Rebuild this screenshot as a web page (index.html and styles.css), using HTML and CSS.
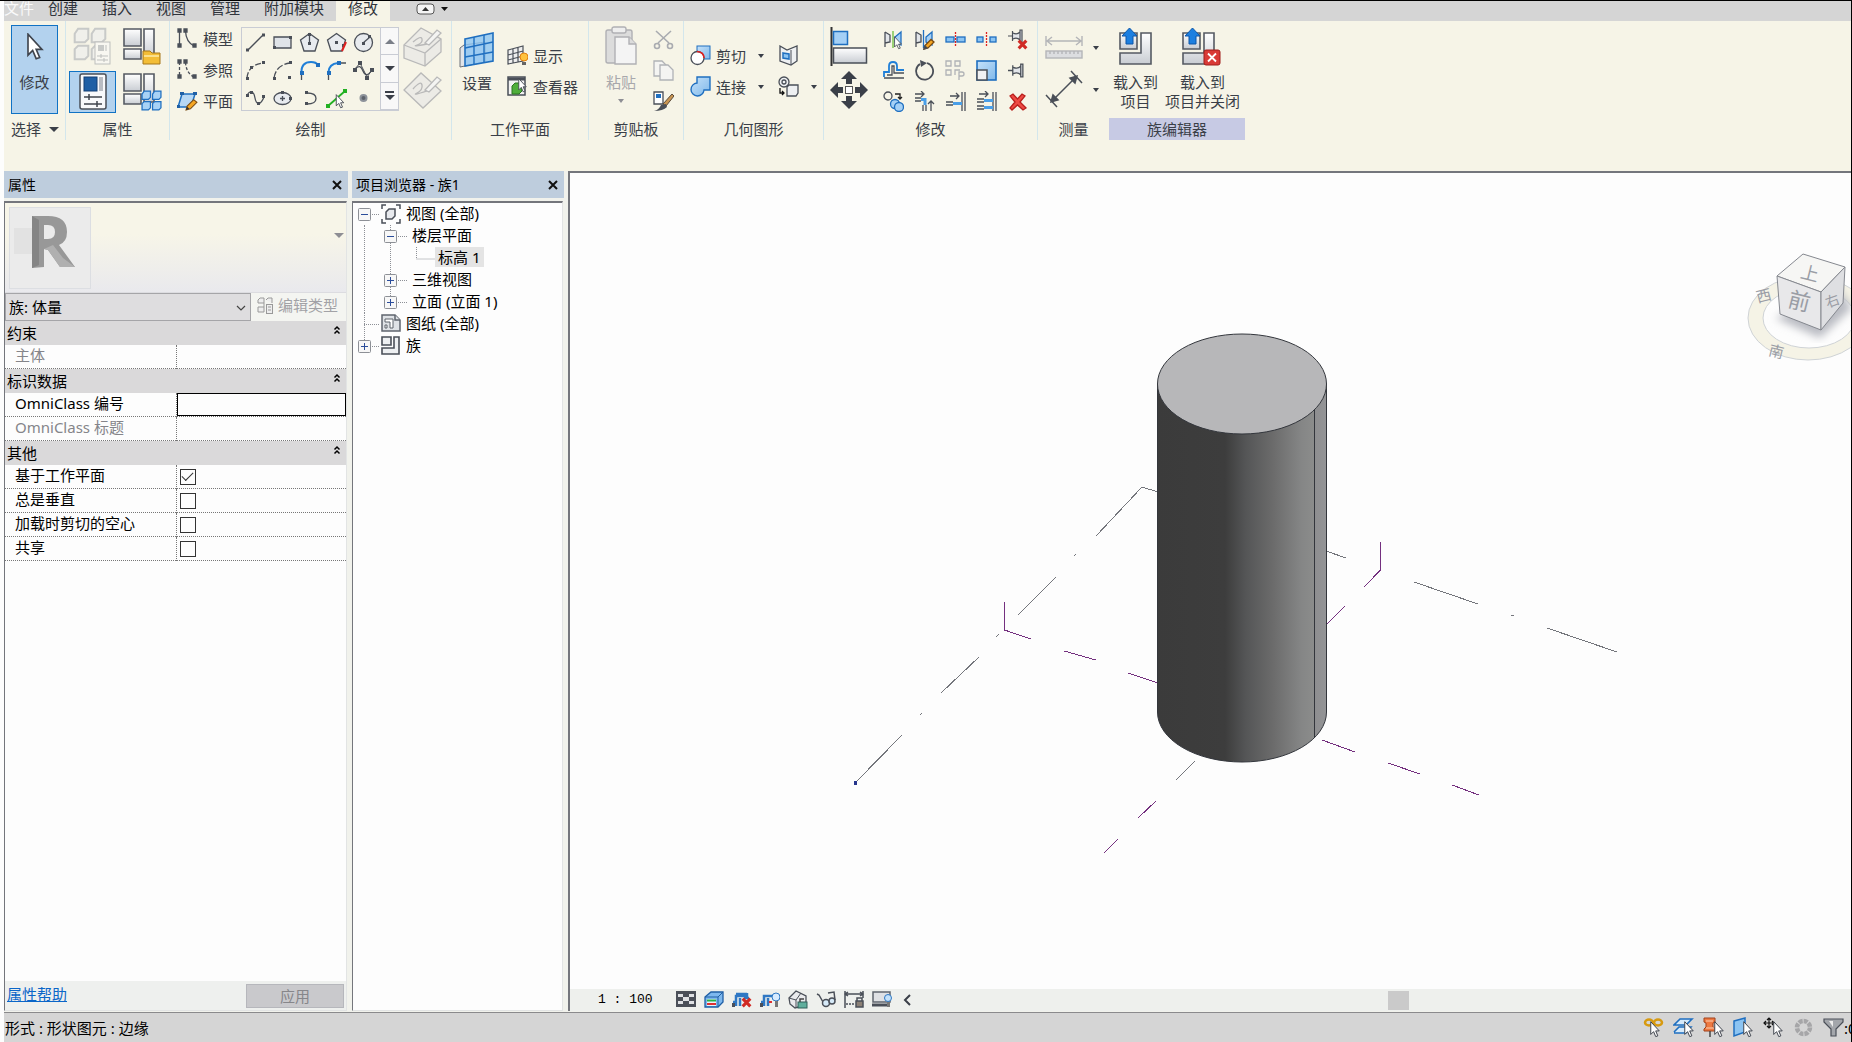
FILE: index.html
```html
<!DOCTYPE html>
<html lang="zh-CN">
<head>
<meta charset="utf-8">
<title>族1</title>
<link rel="stylesheet" href="styles.css">
</head>
<body>
<svg class="defs" aria-hidden="true">
  <defs>
    <linearGradient id="grey" x1="0" y1="0" x2="0" y2="1"><stop offset="0" stop-color="#ffffff"/><stop offset="1" stop-color="#c9cdd3"/></linearGradient>
    <linearGradient id="blue" x1="0" y1="0" x2="1" y2="1"><stop offset="0" stop-color="#c6e2fa"/><stop offset="1" stop-color="#7fb8ea"/></linearGradient>
    <symbol id="cursor" viewBox="0 0 14 24"><path d="M1 1V19L5 15L8 22L11 21L8 14H13Z" fill="#fff" stroke="#3f444d" stroke-width="1.4"/></symbol>
    <symbol id="pencil" viewBox="0 0 12 12"><path d="M1 11L2 7.500L8 1.500L11 4L5 10Z" fill="#f5a623" stroke="#7a4a10"/><path d="M1 11L2 8L4 10Z" fill="#333"/></symbol>
    <symbol id="family" viewBox="0 0 38 38"><g fill="url(#grey)" stroke="#555a63" stroke-width="1.600"><path d="M1 1H18V18H1Z"/><path d="M21 1H31V29H21Z"/><path d="M1 21H18V31H1Z"/></g></symbol>
    <symbol id="cubes" viewBox="0 0 20 20"><g stroke-width="1.200"><path d="M1 4L3 1H9V7L7 9H1Z"/><path d="M11 4L13 1H19V7L17 9H11Z"/><path d="M1 13L3 11H9V17L7 19H1Z"/><path d="M11 13L13 11H19V17L17 19H11Z"/></g></symbol>
    <symbol id="redx" viewBox="0 0 10 10"><path d="M1.500 1.500L8.500 8.500M8.500 1.500L1.500 8.500" stroke="#d02a24" stroke-width="2.800"/></symbol>
    <symbol id="pin" viewBox="0 0 16 14"><path d="M0 7H4M4.500 2V12M5 4Q9 6 12 3V11Q9 8 5 10M12 1H14V13H12Z" fill="#e3e6ea" stroke="#4a4f58" stroke-width="1.200"/></symbol>
    <symbol id="load" viewBox="0 0 40 38"><g fill="url(#grey)" stroke="#555a63" stroke-width="1.600"><path d="M1 5H18V21H1Z"/><path d="M22 5H32V36H1V25H22Z"/></g><path d="M10.500 0L18 8H14V16H7V8H3Z" fill="#1c7fe0" stroke="#0c57a8"/></symbol>
    <symbol id="collapse" viewBox="0 0 8 10"><path d="M1.500 4.500L4 2L6.500 4.500M1.500 8.500L4 6L6.500 8.500" fill="none" stroke="#000" stroke-width="1.500"/></symbol>
    <symbol id="box" viewBox="0 0 13 13"><rect x=".5" y=".5" width="12" height="12" rx="1" fill="#f7f7f7" stroke="#8d9096"/><path d="M3 6.500H10" stroke="#2b4d9b"/></symbol>
    <symbol id="close" viewBox="0 0 12 12"><path d="M2 2L10 10M10 2L2 10" stroke="#111" stroke-width="2"/></symbol>
  </defs>
</svg>

<nav class="tabs" role="tablist">
  <button class="tab tab-file" role="tab">文件</button>
  <button class="tab" role="tab">创建</button>
  <button class="tab" role="tab">插入</button>
  <button class="tab" role="tab">视图</button>
  <button class="tab" role="tab">管理</button>
  <button class="tab" role="tab">附加模块</button>
  <button class="tab tab-active" role="tab" aria-selected="true">修改</button>
  <button class="ribbon-toggle" aria-label="最小化功能区">
    <svg width="32" height="12" viewBox="0 0 32 12"><rect x="1" y="1" width="17" height="10" rx="3" fill="#f4f4f4" stroke="#555"/><path d="M6 8L9.500 4L13 8Z" fill="#333"/><path d="M25 4H32L28.500 8Z" fill="#111"/></svg>
  </button>
</nav>

<header class="ribbon">
  <section class="group g-select">
    <div class="tools">
      <button class="modify"><svg width="18" height="28"><use href="#cursor"/></svg><span>修改</span></button>
    </div>
    <h2 class="label">选择<i class="arrow arrow-big"></i></h2>
  </section>

  <section class="group g-props">
    <div class="tools prop-grid">
      <button aria-label="族类型属性"><svg width="40" height="40" viewBox="0 0 40 40"><g opacity=".55"><svg width="34" height="34" fill="#eceef0" stroke="#a4a8b0"><use href="#cubes"/></svg><rect x="22" y="15" width="15" height="22" fill="#fafafa" stroke="#8f949c"/><rect x="25" y="18" width="6" height="6" fill="#a4a8b0"/><path d="M33 18V24M24 29H35M28 27V31M24 33H35M31 31V35" stroke="#8f949c"/></g></svg></button>
      <button aria-label="族类别"><svg width="40" height="40" viewBox="0 0 40 40"><use href="#family" width="38" height="38" x="1" y="1"/><path d="M21 24H28L30 26H38V37H21Z" fill="#f3bd36" stroke="#a5761a"/><path d="M22 29H37" stroke="#fbe08c" stroke-width="2"/></svg></button>
      <button class="pressed" aria-label="属性"><svg width="40" height="38" viewBox="0 0 40 38"><rect x="7" y="1" width="26" height="35" rx="2" fill="#f8f9fb" stroke="#4a4f58" stroke-width="1.500"/><rect x="11" y="4" width="13" height="14" fill="#1f5fa5" stroke="#123f75"/><rect x="26" y="4" width="4" height="14" fill="#b8bcc3"/><path d="M11 24H29M16 21V27M11 31H29M24 28V34" stroke="#3f444d" stroke-width="1.500"/></svg></button>
      <button aria-label="族类型"><svg width="40" height="40" viewBox="0 0 40 40"><use href="#family" width="38" height="38" x="1" y="1"/><svg x="19" y="18" width="21" height="21" viewBox="0 0 20 20" fill="#a8d2f6" stroke="#1f6fc0"><use href="#cubes" width="20" height="20"/></svg></svg></button>
    </div>
    <h2 class="label">属性</h2>
  </section>

  <section class="group g-draw">
    <div class="tools">
      <div class="stack">
        <button class="row"><svg width="21" height="21" viewBox="0 0 21 21" fill="none" stroke="#4a4f58" stroke-width="1.300"><path d="M2.500 3V17M8.500 3Q9 14 17 18"/><path fill="#4a4f58" d="M1 1h3v3H1zM1 16h3v3H1zM7 1h3v3H7zM16 16h3v3h-3z"/></svg>模型</button>
        <button class="row"><svg width="21" height="21" viewBox="0 0 21 21" fill="none" stroke="#4a4f58" stroke-width="1.300"><path stroke-dasharray="3 2" d="M2.500 3V17M8.500 3Q9 14 17 18"/><path fill="#4a4f58" d="M1 1h3v3H1zM1 16h3v3H1zM7 1h3v3H7zM16 16h3v3h-3z"/></svg>参照</button>
        <button class="row"><svg width="21" height="21" viewBox="0 0 21 21"><path d="M5 4H18L14 17H1Z" fill="#b8d8f4" stroke="#1f6fc0" stroke-width="1.500"/><path fill="#1f5fa5" d="M3 2h4v3H3zM16 2h4v3h-4zM0 15h3v3H0z"/><use href="#pencil" x="8" y="8" width="13" height="13"/></svg>平面</button>
      </div>
      <div class="gallery">
        <div class="shapes">
          <button aria-label="直线"><svg viewBox="0 0 21 21" class="ink"><path d="M3 18L18 3"/><path class="dot" d="M1 16.500h3v3H1zM17 1.500h3v3h-3z"/></svg></button>
          <button aria-label="矩形"><svg viewBox="0 0 21 21" class="ink"><path d="M2 5H19V16H2Z" fill="#dfe3e8"/><path class="dot" d="M17 4h3v3h-3zM1 14h3v3H1z"/></svg></button>
          <button aria-label="内接多边形"><svg viewBox="0 0 21 21" class="ink"><path d="M10.500 1.500L19.500 8L16 19H5L1.500 8Z" fill="#e8ebef"/><path d="M10.500 2V11"/><path class="dot" d="M9 10h3v3H9zM9 1h3v3H9z"/></svg></button>
          <button aria-label="外接多边形"><svg viewBox="0 0 21 21" class="ink"><path d="M10.500 1.500L19.500 8L16 19H5L1.500 8Z" fill="#e8ebef"/><path class="dot" d="M9 9h3v3H9zM16 12h3v3h-3z"/><path d="M20 10L16 19" stroke="#e02020" stroke-width="2"/></svg></button>
          <button aria-label="圆形"><svg viewBox="0 0 21 21" class="ink"><circle cx="10.500" cy="10.500" r="9" fill="#e8ebef"/><path d="M10 11L17 5"/><path class="dot" d="M9 10h3v3H9zM15 3h3v3h-3z"/></svg></button>
          <button aria-label="起点终点半径弧"><svg viewBox="0 0 21 21" class="ink"><path d="M2 18Q3 5 18 3" stroke-dasharray="6 2"/><path class="dot" d="M1 17h3v3H1zM17 1h3v3h-3zM5 6h3v3H5z"/></svg></button>
          <button aria-label="圆心端点弧"><svg viewBox="0 0 21 21" class="ink"><path d="M2 18Q4 5 18 3" stroke-dasharray="7 2"/><path class="dot" d="M1 17h3v3H1zM17 1h3v3h-3zM16 16h3v3h-3z"/></svg></button>
          <button aria-label="相切弧"><svg viewBox="0 0 21 21" class="ink"><path d="M2.500 13Q2 2 12 2Q17 2 19 5" stroke="#1f7fd8" stroke-width="2"/><path d="M2.500 14V20"/><path fill="#1f6fc0" stroke="none" d="M1 11h4v4H1zM17 3h4v4h-4z"/></svg></button>
          <button aria-label="圆角弧"><svg viewBox="0 0 21 21" class="ink"><path d="M2.500 12Q3 4 12 3" stroke="#1f7fd8" stroke-width="2"/><path d="M2.500 14V20M14 3H20"/><path fill="#1f6fc0" stroke="none" d="M1 11h4v4H1zM11 1h4v4h-4z"/></svg></button>
          <button aria-label="样条曲线"><svg viewBox="0 0 21 21" class="ink"><path d="M2 9C6 5 8 6 10 11S15 16 19 10"/><path d="M2 9L7 3L14 17L19 10" stroke-width="1"/><path class="dot" d="M0 8h4v4H0zM5 1h4v4H5zM12 16h4v4h-4zM17 8h4v4h-4z"/></svg></button>
          <button aria-label="通过点的样条曲线"><svg viewBox="0 0 21 21" class="ink"><path d="M2 7C6 1 9 4 10 10S15 19 19 9"/><path class="dot" d="M1 6h3v3H1zM5 3h3v3H5zM12 14h3v3h-3zM17 7h3v3h-3z"/></svg></button>
          <button aria-label="椭圆"><svg viewBox="0 0 21 21" class="ink"><ellipse cx="10.500" cy="10.500" rx="8.500" ry="6" fill="#e8ebef"/><path d="M10.500 8V13M8 10.500H13"/><path class="dot" d="M9 3h3v3H9zM17 9h3v3h-3z"/></svg></button>
          <button aria-label="半椭圆"><svg viewBox="0 0 21 21" class="ink"><path d="M8 5Q17 5 17 10.500T8 16"/><path class="dot" d="M6 3h3v3H6zM6 14h3v3H6z"/></svg></button>
          <button aria-label="拾取线"><svg viewBox="0 0 21 21" class="ink"><path d="M2 18L19 3" stroke="#22b022" stroke-width="1.800"/><path fill="#22b022" stroke="none" d="M0 16h4v4H0zM17 1h4v4h-4z"/><use href="#cursor" x="9" y="6" width="10" height="15"/></svg></button>
          <button aria-label="点图元"><svg viewBox="0 0 21 21"><circle cx="10.500" cy="10" r="4" fill="#8d929a"/><circle cx="10.500" cy="10" r="2" fill="#5d626b"/></svg></button>
        </div>
        <div class="scroller">
          <button aria-label="上一行"><i class="arrow arrow-up"></i></button>
          <button aria-label="下一行"><i class="arrow arrow-big"></i></button>
          <button aria-label="更多"><i class="bar"></i><i class="arrow arrow-big"></i></button>
        </div>
      </div>
      <div class="surface">
        <svg width="40" height="40" viewBox="0 0 40 40" fill="#ecebe6" stroke="#b9b9b9" stroke-width="1.300"><path d="M1 18L18 1L38 12V25L22 39L1 31Z"/><path d="M1 18L22 26L38 12M22 26V39"/><path d="M10 15Q18 8 19 12T14 18T24 17" fill="none"/><path d="M22 16L34 3L38 6L26 18Z" fill="#f4f4f2"/></svg>
        <svg width="40" height="40" viewBox="0 0 40 40" fill="#ecebe6" stroke="#b9b9b9" stroke-width="1.300"><path d="M1 19L18 2L38 20L20 37Z"/><path d="M10 18Q18 9 19 14T14 22T24 20" fill="none"/><path d="M22 19L34 6L38 9L26 21Z" fill="#f4f4f2"/></svg>
      </div>
    </div>
    <h2 class="label">绘制</h2>
  </section>

  <section class="group g-plane">
    <div class="tools">
      <button class="big"><svg width="36" height="36" viewBox="0 0 36 36"><path d="M1 16L5 13L26 10V30L1 35Z" fill="#e1e4e8" stroke="#6b7078"/><path d="M6 7L34 1V29L6 34Z" fill="#8cc4f2" fill-opacity=".8" stroke="#1f6fc0" stroke-width="1.600"/><path d="M15 5V32M25 3V31M6 16L34 10M6 25L34 20" stroke="#1f6fc0" stroke-width="1.400"/></svg><span>设置</span></button>
      <div class="stack two">
        <button class="row"><svg width="21" height="21" viewBox="0 0 21 21"><path d="M1 5L16 1V16L1 19ZM6 4V18M11 2V17M1 10L16 6M1 15L16 11" fill="#eee" stroke="#4a4f58" stroke-width="1.200"/><circle cx="17" cy="12" r="4" fill="#ffc23d" stroke="#e08010"/><path d="M15 17H19V20H15Z" fill="#666"/></svg>显示</button>
        <button class="row"><svg width="21" height="21" viewBox="0 0 21 21"><rect x="1" y="1" width="17" height="18" fill="#f2f2f2" stroke="#4a4f58" stroke-width="1.500"/><path d="M1 3H18" stroke="#4a4f58" stroke-width="3"/><path d="M5 10L8 7H15V15L12 18H5Z" fill="#4fae3a" stroke="#2b7420"/><use href="#cursor" x="11" y="2" width="9" height="15"/></svg>查看器</button>
      </div>
    </div>
    <h2 class="label">工作平面</h2>
  </section>

  <section class="group g-clip">
    <div class="tools">
      <button class="big" disabled><svg width="34" height="40" viewBox="0 0 34 40" fill="#dcdcdc" stroke="#b0b0b4" stroke-width="1.400"><rect x="2" y="4" width="26" height="33" rx="2"/><rect x="8" y="1" width="14" height="6" rx="2" fill="#eee"/><path d="M11 11H25L32 18V38H11Z" fill="#f4f4f4"/><path d="M25 11V18H32"/></svg><span>粘贴</span><i class="arrow dim"></i></button>
      <div class="stack">
        <svg width="21" height="21" viewBox="0 0 21 21" fill="none" stroke="#a9abb0" stroke-width="1.600"><path d="M3 2L16 14M18 2L5 14"/><circle cx="4" cy="17" r="2.500"/><circle cx="17" cy="17" r="2.500"/></svg>
        <svg width="21" height="21" viewBox="0 0 21 21" fill="#f4f4f2" stroke="#b0b2b6" stroke-width="1.300"><path d="M1 1H9L13 5V16H1Z"/><path d="M7 5H15L20 10V20H7Z"/></svg>
        <svg width="21" height="21" viewBox="0 0 21 21"><path d="M1 1H10V13H1Z" fill="#fff" stroke="#4a4f58" stroke-width="1.300"/><path d="M3 3H8V7H3Z" fill="#1f6fc0"/><path d="M10 13L19 3L21 5L13 15Z" fill="#c99552" stroke="#5a4a3a"/><path d="M1 20Q6 19 8 14L13 13L14 16Q10 20 1 20Z" fill="#4a4f58"/></svg>
      </div>
    </div>
    <h2 class="label">剪贴板</h2>
  </section>

  <section class="group g-geom">
    <div class="tools">
      <div class="stack two">
        <button class="row"><svg width="21" height="21" viewBox="0 0 21 21"><rect x="7" y="1" width="13" height="13" fill="url(#blue)" stroke="#1f6fc0"/><circle cx="7.500" cy="13" r="6.500" fill="#fff" stroke="#4a4f58" stroke-width="1.300"/><path d="M7 6.500Q14 7 14 13" fill="none" stroke="#e02020" stroke-width="1.600"/></svg>剪切<i class="arrow"></i></button>
        <button class="row"><svg width="21" height="21" viewBox="0 0 21 21"><path d="M7 1H20V14H14A6.500 6.500 0 1 1 7 7Z" fill="url(#blue)" stroke="#1f6fc0" stroke-width="1.400"/></svg>连接<i class="arrow"></i></button>
      </div>
      <div class="stack two">
        <button class="row" aria-label="墙洞口"><svg width="21" height="21" viewBox="0 0 21 21"><path d="M2 1L9 5L19 1V16L13 20L2 16Z" fill="#eef0f2" stroke="#4a4f58" stroke-width="1.300"/><path d="M13 5V20" stroke="#4a4f58"/><path d="M5 8L11 9V14L5 13Z" fill="#8cc4f2" stroke="#1f6fc0" stroke-width="1.500"/></svg></button>
        <button class="row" aria-label="拆分面"><svg width="21" height="21" viewBox="0 0 21 21" fill="#eef0f2" stroke="#4a4f58" stroke-width="1.300"><circle cx="6" cy="6" r="5"/><circle cx="6" cy="6" r="2"/><path d="M9 11L11 9H20V17L18 20H9Z"/><path d="M2 12V17H6M4 15L6 17L4 19" fill="none" stroke="#111"/></svg><i class="arrow"></i></button>
      </div>
    </div>
    <h2 class="label">几何图形</h2>
  </section>

  <section class="group g-edit">
    <div class="tools">
      <div class="pair">
        <button aria-label="对齐"><svg width="38" height="40" viewBox="0 0 38 40"><path d="M1.500 0V39" stroke="#333" stroke-width="2"/><rect x="3.500" y="4.500" width="14" height="13" fill="#a4d0f6" stroke="#1f6fc0" stroke-width="1.500"/><rect x="3.500" y="21" width="33" height="15" fill="url(#grey)" stroke="#4a4f58" stroke-width="1.500"/></svg></button>
        <button aria-label="移动"><svg width="38" height="38" viewBox="0 0 38 38" fill="#3a3f48"><path d="M19 0L27 8H22V13H16V8H11ZM19 38L27 30H22V25H16V30H11ZM0 19L8 11V16H13V22H8V27ZM38 19L30 11V16H25V22H30V27Z"/><rect x="15.500" y="15.500" width="7" height="7" fill="#fff" stroke="#555"/></svg></button>
      </div>
      <div class="edit-grid">
        <button aria-label="镜像拾取轴"><svg viewBox="0 0 21 21" class="ink"><path d="M2 3V18M2 3L7 6V13L2 14" fill="#e3e6ea"/><path d="M18 3L12 8V13L18 16Z" fill="#a4d0f6" stroke="#1f6fc0"/><path d="M10 2V19" stroke="#6bbf3a"/><use href="#cursor" x="11" y="7" width="8" height="14"/></svg></button>
        <button aria-label="镜像绘制轴"><svg viewBox="0 0 21 21" class="ink"><path d="M2 3V18M2 3L7 6V13L2 14" fill="#e3e6ea"/><path d="M18 3L12 8V13L18 16Z" fill="#a4d0f6" stroke="#1f6fc0"/><path d="M9.500 1V19" stroke="#1f6fc0"/><use href="#pencil" x="9" y="9" width="12" height="12"/></svg></button>
        <button aria-label="拆分图元"><svg viewBox="0 0 21 21" class="ink"><rect x="1" y="8" width="8" height="5" fill="#8cc4f2" stroke="#1f6fc0"/><rect x="12" y="8" width="8" height="5" fill="#8cc4f2" stroke="#1f6fc0"/><path d="M10.500 3V18" stroke="#e02020" stroke-dasharray="2 1"/></svg></button>
        <button aria-label="用间隙拆分"><svg viewBox="0 0 21 21" class="ink"><rect x="1" y="8" width="6" height="5" fill="#8cc4f2" stroke="#1f6fc0"/><rect x="14" y="8" width="6" height="5" fill="#8cc4f2" stroke="#1f6fc0"/><path d="M10.500 3V18" stroke="#e02020" stroke-dasharray="2 1"/></svg></button>
        <button aria-label="解锁"><svg viewBox="0 0 21 21"><use href="#pin" x="1" y="0" width="16" height="14"/><use href="#redx" x="10" y="10" width="11" height="11"/></svg></button>
        <button aria-label="偏移"><svg viewBox="0 0 21 21" class="ink"><path d="M1 17V12H6V6Q6 2 10 2T14 6V10H21" stroke="#1f7fd8" stroke-width="1.800"/><path d="M1 18H21M4 15H9V6H11V13H21"/></svg></button>
        <button aria-label="旋转"><svg viewBox="0 0 21 21" class="ink"><path d="M6 4A8.500 8.500 0 1 0 13 3" stroke-width="1.800"/><path d="M6 0L13 3L7 7Z" class="dot"/></svg></button>
        <button aria-label="阵列" disabled><svg viewBox="0 0 21 21" fill="none" stroke="#b0b2b6" stroke-width="1.300"><path d="M1 1H6V6H1ZM10 1H15V6H10ZM1 10H6V15H1ZM15 10H10V15M14 20V12H17Q19 12 19 14T17 16H14"/></svg></button>
        <button aria-label="缩放"><svg viewBox="0 0 21 21"><rect x="1" y="1" width="19" height="19" fill="url(#blue)" stroke="#1f6fc0" stroke-width="1.600"/><rect x="1" y="10" width="10" height="10" fill="#f0f1f3" stroke="#4a4f58" stroke-width="1.500"/></svg></button>
        <button aria-label="锁定"><svg viewBox="0 0 21 21"><use href="#pin" x="1" y="3" width="17" height="15"/></svg></button>
        <button aria-label="复制"><svg viewBox="0 0 21 21" class="ink"><circle cx="5" cy="5" r="4"/><circle cx="12" cy="13" r="4.500" fill="#a4d0f6" stroke="#1f6fc0"/><circle cx="16" cy="16" r="4.500" fill="#a4d0f6" stroke="#1f6fc0"/><path d="M12 3H17V8M15 6L17 8L19 6" stroke="#222"/></svg></button>
        <button aria-label="修剪延伸为角"><svg viewBox="0 0 21 21" class="ink"><path d="M1 3H10M7 0L10 3L7 6M17 20V10M14 13L17 10L20 13"/><path d="M1 7H7M1 10H7M9 14V20M12 14V20"/><path d="M7 8.500H11V14" stroke="#4a9fe8" stroke-width="3"/></svg></button>
        <button aria-label="修剪延伸单个图元"><svg viewBox="0 0 21 21" class="ink"><path d="M5 5H14M11 2L14 5L11 8M17 1V20M20 1V20"/><path d="M1 11H8M1 14H8"/><path d="M8 12.500H17" stroke="#4a9fe8" stroke-width="3"/></svg></button>
        <button aria-label="修剪延伸多个图元"><svg viewBox="0 0 21 21" class="ink"><path d="M3 3H12M9 0L12 3L9 6M17 1V20M20 1V20"/><path d="M1 8H8M1 11H8M1 15H8M1 18H8"/><path d="M8 9.500H17M8 16.500H17" stroke="#4a9fe8" stroke-width="3"/></svg></button>
        <button aria-label="删除"><svg viewBox="0 0 21 21"><path d="M3 5L6 3L10.500 8L15 3L18 5L13 11L19 17L16 19L10.500 14L5 19L3 17L8 11Z" fill="#ee4a44" stroke="#b81f1c" stroke-width="1.300"/></svg></button>
      </div>
    </div>
    <h2 class="label">修改</h2>
  </section>

  <section class="group g-measure">
    <div class="tools">
      <div class="pair">
        <button class="row" aria-label="测量" disabled><svg width="38" height="24" viewBox="0 0 38 24" fill="none" stroke="#b4b5b8" stroke-width="1.400"><path d="M2 5H36M7 1L2 5L7 9M31 1L36 5L31 9M1 0V10M37 0V10"/><rect x="1" y="15" width="36" height="7" fill="#dcdde0"/><path d="M5 15V18M9 15V18M13 15V18M17 15V18M21 15V18M25 15V18M29 15V18M33 15V18"/></svg><i class="arrow"></i></button>
        <button class="row" aria-label="对齐尺寸标注"><svg width="38" height="40" viewBox="0 0 38 40" fill="none" stroke="#4a4f58" stroke-width="1.500"><path d="M7 31L31 7M1 25L12 37M26 1L37 13"/><path fill="#4a4f58" d="M6 32L8 25L13 30ZM32 6L30 13L25 8Z"/></svg><i class="arrow"></i></button>
      </div>
    </div>
    <h2 class="label">测量</h2>
  </section>

  <section class="group g-editor">
    <div class="tools">
      <button class="big"><svg width="34" height="38" viewBox="0 0 34 38"><use href="#load" width="40" height="38"/></svg><span>载入到<br>项目</span></button>
      <button class="big"><svg width="40" height="38" viewBox="0 0 40 38"><use href="#load" width="40" height="38"/><rect x="22" y="22" width="16" height="15" rx="2" fill="#d93a36" stroke="#a01c1a"/><path d="M26 25.500L34 33.500M34 25.500L26 33.500" stroke="#fff" stroke-width="1.800"/></svg><span>载入到<br>项目并关闭</span></button>
    </div>
    <h2 class="label label-hot">族编辑器</h2>
  </section>
</header>

<main class="work">
  <aside class="dock">
    <div class="dock-title"><h2>属性</h2><button aria-label="关闭"><svg width="12" height="12"><use href="#close"/></svg></button></div>
    <div class="dock-body">
      <div class="type-card">
        <div class="thumb">
          <svg width="80" height="80" viewBox="0 0 80 80"><path d="M4 20H22V46H4Z" fill="#e2e2e2"/><path fill-rule="evenodd" d="M22 8H38Q57 8 57 24Q57 34 49 37L65 59H50L38 42L34 41V59L22 60ZM34 17V31H38Q45 31 45 24Q45 17 38 17Z" fill="#989898"/><path d="M22 8V60L29 57V12Z" fill="#858585"/><path d="M34 41L38 42L50 59H65L53 50L43 37Z" fill="#b0b0b0"/></svg>
        </div>
        <button aria-label="类型选择器"><i class="arrow arrow-big dim"></i></button>
      </div>
      <div class="type-row">
        <div class="combo">
          <select aria-label="族"><option>族: 体量</option></select>
          <svg width="10" height="6" viewBox="0 0 10 6"><path d="M1 1L5 5L9 1" fill="none" stroke="#444" stroke-width="1.200"/></svg>
        </div>
        <button class="edit-type" disabled><svg width="17" height="17" viewBox="0 0 17 17" fill="#eee" stroke="#999"><path d="M1 3L3 1H7V6H1ZM9 3L11 1H15V6M1 10H7V15H1ZM7 6V10"/><rect x="9.500" y="7.500" width="6" height="9"/><path d="M11 10H14M11 13H14"/></svg>编辑类型</button>
      </div>
      <table class="props">
        <tbody>
          <tr><th colspan="2" scope="colgroup"><span>约束<svg width="8" height="10"><use href="#collapse"/></svg></span></th></tr>
          <tr class="off"><td>主体</td><td></td></tr>
          <tr><th colspan="2" scope="colgroup"><span>标识数据<svg width="8" height="10"><use href="#collapse"/></svg></span></th></tr>
          <tr><td><label for="omni">OmniClass 编号</label></td><td class="field"><input id="omni" type="text"></td></tr>
          <tr class="off"><td>OmniClass 标题</td><td></td></tr>
          <tr><th colspan="2" scope="colgroup"><span>其他<svg width="8" height="10"><use href="#collapse"/></svg></span></th></tr>
          <tr><td><label for="c1">基于工作平面</label></td><td class="field"><input id="c1" type="checkbox" checked></td></tr>
          <tr><td><label for="c2">总是垂直</label></td><td class="field"><input id="c2" type="checkbox"></td></tr>
          <tr><td><label for="c3">加载时剪切的空心</label></td><td class="field"><input id="c3" type="checkbox"></td></tr>
          <tr><td><label for="c4">共享</label></td><td class="field"><input id="c4" type="checkbox"></td></tr>
        </tbody>
      </table>
      <div class="dock-foot"><a href="#help">属性帮助</a><button disabled>应用</button></div>
    </div>
  </aside>

  <aside class="dock">
    <div class="dock-title"><h2>项目浏览器 - 族1</h2><button aria-label="关闭"><svg width="12" height="12"><use href="#close"/></svg></button></div>
    <div class="dock-body tree">
      <ul>
        <li><div class="node"><svg width="23" height="22" viewBox="0 0 23 22"><use href="#box" x="0" y="5" width="13" height="13"/><path class="twig" d="M14 11.500H21"/></svg><svg width="20" height="20" viewBox="0 0 20 20" fill="none" stroke="#4a4f58" stroke-width="1.500"><path d="M1 5V1H5M15 1H19V5M19 15V19H15M5 19H1V15"/><path d="M5 8L8 5H14V12L11 15H5Z" fill="#e8eaee"/></svg><span>视图 (全部)</span></div>
          <ul>
            <li><div class="node l2"><svg width="26" height="22" viewBox="0 0 26 22"><path class="twig" d="M6.500 0V22M14 11.500H24"/><use href="#box" x="0" y="5" width="13" height="13"/></svg><span>楼层平面</span></div>
              <ul><li><div class="node l2"><svg width="51" height="22" viewBox="0 0 51 22"><path class="twig" d="M6.500 0V22M32.500 0V12H51"/></svg><span class="current">标高 1</span></div></li></ul>
            </li>
            <li><div class="node l2"><svg width="26" height="22" viewBox="0 0 26 22"><path class="twig" d="M6.500 0V22M14 11.500H24"/><use href="#box" x="0" y="5" width="13" height="13"/><path d="M6.500 8V15" stroke="#2b4d9b"/></svg><span>三维视图</span></div></li>
            <li><div class="node l2"><svg width="26" height="22" viewBox="0 0 26 22"><path class="twig" d="M6.500 0V6M14 11.500H24"/><use href="#box" x="0" y="5" width="13" height="13"/><path d="M6.500 8V15" stroke="#2b4d9b"/></svg><span>立面 (立面 1)</span></div></li>
          </ul>
        </li>
        <li><div class="node"><svg width="23" height="22" viewBox="0 0 23 22"><path class="twig" d="M6.500 0V22M6 11.500H21"/></svg><svg width="20" height="20" viewBox="0 0 20 20" fill="#dfe2e6" stroke="#5f646d" stroke-width="1.500"><path d="M1 1H14L19 6V17H1Z"/><path d="M4 5H12V14H9V8H4ZM4 11H6V14H4Z" fill="#fff" stroke-width="1"/><path d="M14 1V6H19"/></svg><span>图纸 (全部)</span></div></li>
        <li><div class="node"><svg width="23" height="22" viewBox="0 0 23 22"><path class="twig" d="M6.500 0V6M14 11.500H21"/><use href="#box" x="0" y="5" width="13" height="13"/><path d="M6.500 8V15" stroke="#2b4d9b"/></svg><svg width="20" height="20" viewBox="0 0 20 20" fill="#eef0f2" stroke="#4a4f58" stroke-width="1.600"><path d="M1 1H10V9H1ZM13 1H18V18H1V12H13Z"/></svg><span>族</span></div></li>
      </ul>
    </div>
  </aside>

  <section class="view">
    <div class="canvas">
      <svg class="scene" viewBox="570 173 1281 816" role="img" aria-label="三维视图">
        <defs>
          <linearGradient id="side" gradientUnits="userSpaceOnUse" x1="1157" y1="0" x2="1327" y2="0"><stop offset="0" stop-color="#3b3b3b"/><stop offset=".4" stop-color="#3d3d3d"/><stop offset=".52" stop-color="#545556"/><stop offset=".68" stop-color="#6b6b6b"/><stop offset=".85" stop-color="#858686"/><stop offset=".92" stop-color="#8b8c8b"/><stop offset=".93" stop-color="#8e8e90"/><stop offset="1" stop-color="#949597"/></linearGradient>
        </defs>
        <g fill="none" stroke="#74767c" shape-rendering="crispEdges">
          <path d="M855 783L902 735M920 715L922 713M941 693L979 657M996 637L999 634M1018 615L1056 577M1074 556L1076 554M1096 536L1142 487L1158 492M1326 551L1346 558M1414 582L1478 604M1511 615L1514 616M1547 628L1617 652M1195 761L1176 780"/>
        </g>
        <g fill="none" stroke="#74307f" shape-rendering="crispEdges">
          <path d="M1004.500 602V630L1031 639M1064 651L1096 660M1128 673L1158 683M1322 740L1355 752M1388 763L1420 774M1452 785L1479 795M1380.500 542V570L1364 587M1345 606L1326 625M1156 801L1138 818M1118 839L1104 853"/>
        </g>
        <rect x="854" y="781" width="3" height="4" fill="#26358c"/>
        <path d="M1157.500 384V712A84.500 50 0 0 0 1326.500 712V384Z" fill="url(#side)" stroke="#33363c"/>
        <path d="M1314.500 410V738" stroke="#33363c"/>
        <ellipse cx="1242" cy="384" rx="84.500" ry="50" fill="#b7b7b9" stroke="#33363c"/>
      </svg>
      <svg class="viewcube" width="104" height="130" viewBox="1747 240 104 130" role="img" aria-label="ViewCube">
        <defs><filter id="soft"><feGaussianBlur stdDeviation="4"/></filter></defs>
        <path fill-rule="evenodd" d="M1748 318a60 42 0 1 0 120 0a60 42 0 1 0 -120 0ZM1763 318a46 30 0 1 0 92 0a46 30 0 1 0 -92 0Z" fill="#f5f3e6" stroke="#cfd3d6"/>
        <path d="M1775 318L1820 338L1852 308L1840 290Z" fill="#b9bbc2" filter="url(#soft)"/>
        <g stroke="#85888f" stroke-linejoin="round">
          <path d="M1777 276L1803 254L1845 267L1821 292Z" fill="#f6f6f4"/>
          <path d="M1777 276L1821 292V330L1780 314Z" fill="#e8e8ea"/>
          <path d="M1821 292L1845 267L1843 303L1821 330Z" fill="#dedfe2"/>
        </g>
        <g class="cube-text">
          <text x="1801" y="280" transform="rotate(14 1810 273)">上</text>
          <text x="1788" y="309" class="front" transform="rotate(14 1799 302)">前</text>
          <text x="1825" y="306" transform="rotate(-20 1832 300)" class="side">右</text>
          <text x="1756" y="301" class="compass" transform="rotate(-14 1764 295)">西</text>
          <text x="1769" y="357" class="compass" transform="rotate(14 1777 351)">南</text>
        </g>
      </svg>
    </div>
    <div class="view-bar">
      <button class="scale">1 : 100</button>
      <button aria-label="详细程度"><svg viewBox="0 0 20 20"><rect x="0" y="1" width="20" height="16" fill="#4a4f58"/><path d="M2 4H7V7H2ZM13 4H18V7H13ZM7 7H13V11H7ZM2 11H7V14H2ZM13 11H18V14H13Z" fill="#dfe1e4"/></svg></button>
      <button aria-label="视觉样式"><svg viewBox="0 0 20 20"><path d="M1 7L7 2H19V12L14 17H1Z" fill="#7db8ee" stroke="#1f5fa5" stroke-width="1.300"/><path d="M1 7H14V17M14 7L19 2" fill="none" stroke="#1f5fa5"/><path d="M3 9H12V16H3Z" fill="#e8f4fd"/><path d="M3 10.500H12" stroke="#28b048" stroke-width="2"/><path d="M3 14H12" stroke="#e03030" stroke-width="2"/></svg></button>
      <button aria-label="裁剪视图"><svg viewBox="0 0 20 20"><path d="M1 12H4V6H15V3M4 4H15M4 8V16M8 8V16M12 8H17" fill="none" stroke="#2f78c4" stroke-width="2.500"/><path d="M0 13H3V17H0" fill="#4a4f58"/><use href="#redx" x="9" y="7" width="11" height="11"/></svg></button>
      <button aria-label="显示裁剪区域"><svg viewBox="0 0 20 20"><path d="M1 12H4V6H15M4 8V16M8 8V16" fill="none" stroke="#2f78c4" stroke-width="2.500"/><path d="M0 13H3V17H0" fill="#4a4f58"/><circle cx="16" cy="7" r="4" fill="#d8ecff" stroke="#2f78c4"/><path d="M15 11H18V17H15Z" fill="#777"/><path d="M9 12H12" stroke="#e03030" stroke-width="2"/></svg></button>
      <button aria-label="解锁的三维视图"><svg viewBox="0 0 20 20"><path d="M1 8L8 1L18 6V15L7 18L2 14Z" fill="#e9eaec" stroke="#4a4f58" stroke-width="1.300"/><path d="M1 8L8 10L13 3M8 10V17" fill="none" stroke="#4a4f58"/><rect x="10" y="12" width="9" height="6" fill="#5fae9c" stroke="#2f5f58"/><path d="M12 12V9H16" fill="none" stroke="#444" stroke-width="1.500"/></svg></button>
      <button aria-label="临时隐藏"><svg viewBox="0 0 20 20" fill="#d6eaf8" stroke="#4a4f58" stroke-width="1.500"><path d="M1 4L3 5L7 12M12 3L18 2L19 10" fill="none"/><circle cx="10" cy="13" r="3.500"/><circle cx="16" cy="11" r="3"/></svg></button>
      <button aria-label="显示约束"><svg viewBox="0 0 20 20" fill="none" stroke="#4a4f58" stroke-width="1.500"><path d="M1 1V18M19 1V8M1 4H19M4 2L1 4L4 6M16 2L19 4L16 6"/><path d="M2 14H10" stroke-dasharray="2 1"/><rect x="12" y="11" width="7" height="6" fill="#8b8076"/><path d="M13 11V8H18V11"/></svg></button>
      <button aria-label="预览可见性"><svg viewBox="0 0 20 20"><path d="M1 2H18V12H1Z" fill="#dfe1e4" stroke="#5f646d" stroke-width="1.500"/><path d="M0 15H16" stroke="#4a4f58" stroke-width="3"/><circle cx="16" cy="8" r="3.500" fill="#c4e2fb" stroke="#2f78c4"/><path d="M15 12H18V17H15Z" fill="#777"/></svg></button>
      <button aria-label="收起"><svg viewBox="0 0 20 20"><path d="M10 5L5 10L10 15" fill="none" stroke="#3a3f48" stroke-width="2"/></svg></button>
      <span class="track-a"></span><span class="thumb-h"></span><span class="track-b"></span>
    </div>
  </section>
</main>

<footer class="status">
  <p>形式 : 形状图元 : 边缘</p>
  <div class="status-tools">
    <button aria-label="选择链接"><svg viewBox="0 0 21 21"><g fill="none" stroke="#d79a10" stroke-width="2.500"><ellipse cx="6" cy="5.500" rx="4" ry="3"/><ellipse cx="15" cy="5.500" rx="4" ry="3"/></g><use href="#cursor" x="7" y="4" width="10" height="17"/></svg></button>
    <button aria-label="选择基线图元"><svg viewBox="0 0 21 21"><path d="M7 2H19L13 8H1ZM1 15L6 10H18L13 16H1" fill="#d6eafa" stroke="#1f6fc0" stroke-width="1.600"/><use href="#cursor" x="11" y="4" width="10" height="17"/></svg></button>
    <button aria-label="选择锁定图元"><svg viewBox="0 0 21 21"><path d="M1 1H12V5L10 6V10L13 12V14H1V12L3 10V6L1 5Z" fill="#ee7a42" stroke="#a0401a"/><path d="M3 4H10M3 11H11" stroke="#fbd0b4"/><path d="M7 14V20" stroke="#444" stroke-width="1.500"/><use href="#cursor" x="11" y="4" width="10" height="17"/></svg></button>
    <button aria-label="按面选择图元"><svg viewBox="0 0 21 21"><path d="M1 4L12 1V15L1 19Z" fill="#8cc4f2" stroke="#1f6fc0" stroke-width="1.500"/><use href="#cursor" x="10" y="4" width="10" height="17"/></svg></button>
    <button aria-label="选择时拖拽图元"><svg viewBox="0 0 21 21"><path d="M6 1V11M1 6H11M4 3L6 1L8 3M4 9L6 11L8 9M3 4L1 6L3 8M9 4L11 6L9 8" fill="none" stroke="#111" stroke-width="1.200"/><use href="#cursor" x="10" y="4" width="10" height="17"/></svg></button>
    <button aria-label="后台进程"><svg viewBox="0 0 21 21"><circle cx="10.500" cy="10.500" r="6.500" fill="none" stroke="#a6a6a8" stroke-width="4.500" stroke-dasharray="4 1"/></svg></button>
    <button aria-label="过滤器"><svg viewBox="0 0 21 21"><path d="M1 2H20V5L13 12V19H8V12L1 5Z" fill="#a3a6ab" stroke="#4a4f58" stroke-width="1.200"/><path d="M6 4H10L10 10Z" fill="#eee"/></svg></button>
    <span>:0</span>
  </div>
</footer>
</body>
</html>
```
FILE: styles.css
```css
* { box-sizing: border-box; }

html, body { height: 100%; margin: 0; }

body {
  display: flex;
  flex-direction: column;
  padding-left: 4px;
  border-top: 1px solid #000;
  border-right: 1px solid #000;
  background: #fdfdfd;
  color: #000;
  font: 15px/20px "Noto Sans", "Noto Sans CJK SC", sans-serif;
  overflow: hidden;
}

h2, p, ul { margin: 0; padding: 0; font-size: inherit; font-weight: 400; list-style: none; }

button {
  margin: 0;
  padding: 0;
  border: 0;
  background: none;
  color: inherit;
  font: inherit;
}

svg { display: block; flex: none; }
.defs { position: absolute; width: 0; height: 0; }

.ink { fill: none; stroke: #4a4f58; stroke-width: 1.3; }
.dot { fill: #4a4f58; stroke: none; }

.arrow {
  flex: none;
  border: 3px solid transparent;
  border-top: 4px solid #3a3f48;
  border-bottom: 0;
}
.arrow-big { border-width: 5px 5px 0; }
.arrow-up { border-width: 0 5px 5px; border-bottom: 5px solid #7a7f88; }
.dim { border-top-color: #8e8e94; }

/* Tabs */
.tabs { display: flex; flex: none; height: 20px; background: #d5d5d5; color: #30343c; }
.tab { display: flex; align-items: flex-start; padding: 0 12px; line-height: 15px; height: 20px; }
.tab-file { padding: 0 2px 0 0; color: #fafafa; }
.tab-active { background: #f6f4e7; }
.ribbon-toggle { padding-left: 26px; height: 16px; }

/* Ribbon */
.ribbon {
  display: flex;
  flex: none;
  height: 150px;
  background: #f6f4e7;
  color: #3a3f48;
}
.group { flex: none; height: 119px; border-left: 1px solid #d3e6ec; }
.group:first-child, .g-editor { border-left: 0; }
.tools { display: flex; height: 97px; }
.label { height: 22px; line-height: 22px; text-align: center; }
.label-hot { background: #c7cae4; }

.g-select { width: 61px; }
.g-props { width: 104px; }
.g-draw { width: 282px; }
.g-plane { width: 137px; }
.g-clip { width: 95px; }
.g-geom { width: 140px; }
.g-edit { width: 214px; }
.g-measure { width: 72px; }
.g-editor { width: 136px; }

.g-select .tools { padding: 4px 7px; }
.g-select .label { display: flex; align-items: center; gap: 8px; padding-left: 7px; }
.modify {
  display: flex;
  flex-direction: column;
  align-items: center;
  gap: 11px;
  width: 47px;
  padding-top: 7px;
  border: 1px solid #1072c4;
  background: #b3d2ee;
}

.prop-grid {
  display: grid;
  grid-template: 42px 42px / 47px 47px;
  gap: 3px 2px;
  padding: 5px 3px;
}
.prop-grid button { display: grid; place-items: center; }
.pressed { border: 1px solid #1072c4; background: #b3d2ee; }

.stack { display: grid; grid-template-rows: repeat(3, 31px); align-items: center; padding-top: 3px; }
.stack.two { grid-template-rows: repeat(2, 31px); padding-top: 19px; }
.row { display: flex; align-items: center; gap: 5px; white-space: nowrap; }

.g-draw .stack { padding: 2px 0 0 7px; width: 71px; }
.gallery {
  display: flex;
  width: 158px;
  height: 84px;
  margin-top: 6px;
  border: 1px solid #c9ccd4;
}
.shapes { display: grid; grid-template: repeat(3, 28px) / repeat(5, 27px); width: 138px; }
.shapes button, .edit-grid button { display: grid; place-items: center; }
.shapes svg, .edit-grid svg, .status-tools svg { width: 21px; height: 21px; }
.scroller { display: grid; grid-template-rows: repeat(3, 1fr); flex: 1; }
.scroller button {
  display: flex;
  flex-direction: column;
  align-items: center;
  justify-content: center;
  gap: 2px;
  border-left: 1px solid #c9ccd4;
  border-bottom: 1px solid #c9ccd4;
  background: #f8f8f8;
}
.bar { width: 9px; height: 2px; background: #3a3f48; }
.surface { display: grid; align-content: start; gap: 4px; padding: 6px 0 0 4px; }

.big { display: flex; flex-direction: column; align-items: center; line-height: 19px; white-space: nowrap; }
.big:disabled { color: #a8a8ac; }

.g-plane .tools { padding-left: 6px; gap: 11px; }
.g-plane .big { padding-top: 11px; gap: 6px; width: 38px; }
.g-clip .tools { padding-left: 15px; gap: 15px; }
.g-clip .big { padding-top: 5px; gap: 7px; width: 34px; }
.g-clip .big i { border-top-color: #8e8e94; }
.g-geom .tools { padding-left: 6px; gap: 14px; }
.g-geom .row .arrow { margin-left: 7px; }

.pair { display: grid; align-content: start; justify-items: start; gap: 4px; padding-top: 6px; }
.g-edit .pair { padding-left: 6px; width: 54px; }
.edit-grid { display: grid; grid-template: repeat(3, 31px) / repeat(5, 31px); padding-top: 3px; }
.g-measure .pair { padding-left: 7px; gap: 10px; padding-top: 15px; }
.g-measure .row { gap: 10px; }
.g-editor .tools { padding: 7px 5px 0 4px; justify-content: space-between; }
.g-editor .big { gap: 7px; }

/* Docked palettes */
.work {
  display: grid;
  grid-template-columns: 344px 212px minmax(0, 1fr);
  gap: 4px;
  flex: 1;
  min-height: 0;
  padding-bottom: 1px;
  background: #f1f2ec;
}
.dock { display: flex; flex-direction: column; min-height: 0; }
.dock-title {
  display: flex;
  align-items: center;
  justify-content: space-between;
  flex: none;
  height: 27px;
  margin-bottom: 3px;
  padding: 0 5px 0 4px;
  background: #becddd;
  font-size: 14px;
}
.dock-body {
  display: flex;
  flex-direction: column;
  flex: 1;
  min-height: 0;
  margin-right: 1px;
  border: 1px solid #e2e4e4;
  border-top: 2px solid #74767c;
  border-left: 1px solid #74767c;
  background: #fdfdfd;
}

.type-card {
  display: flex;
  align-items: center;
  justify-content: space-between;
  flex: none;
  height: 90px;
  padding: 0 2px 0 4px;
  border-bottom: 1px solid #dcdce0;
  background: linear-gradient(#f7f5e8 35%, #e9e9ed);
}
.thumb { width: 82px; height: 82px; border: 1px solid #dcdee2; background: #ebebeb; }
.type-row { display: flex; flex: none; height: 28px; background: #f4f5f1; }
.combo { position: relative; }
.combo svg { position: absolute; right: 5px; top: 12px; pointer-events: none; }
.combo select {
  appearance: none;
  display: block;
  width: 246px;
  height: 28px;
  padding: 0 0 0 3px;
  border: 1px solid #a5a5a8;
  border-radius: 0;
  background: #dedddf;
  color: #000;
  font: inherit;
}
.edit-type { display: flex; gap: 4px; margin-left: 6px; height: 24px; align-items: center; color: #a2a2a6; }

.props { width: 100%; border-spacing: 0; table-layout: fixed; }
.props th { height: 24px; padding: 0 5px 0 2px; background: #dad9da; font-weight: 400; text-align: left; }
.props th span { display: flex; justify-content: space-between; line-height: 22px; }
.props th svg { margin-top: 3px; }
.props td { height: 24px; padding: 0 0 2px 10px; border-bottom: 1px dotted #777; line-height: 21px; white-space: nowrap; }
.props td:first-child { width: 50%; }
.props td + td { border-left: 1px dotted #777; }
.props .field { padding: 0; }
.off { color: #85858a; }
.field input { display: block; margin: 0; }
.field input[type="text"] { width: 100%; height: 23px; border: 1px solid #000; background: #fdfdfd; border-radius: 0; }
.field input[type="checkbox"] {
  appearance: none;
  display: grid;
  place-items: center;
  width: 16px;
  height: 16px;
  margin-left: 3px;
  border: 1px solid #333;
  background: #fdfdfd;
}
.field input:checked::after {
  content: "";
  width: 10px;
  height: 5px;
  margin-bottom: 3px;
  border: solid #333;
  border-width: 0 0 1px 1px;
  transform: rotate(-45deg);
}

.dock-foot {
  display: flex;
  align-items: center;
  justify-content: space-between;
  height: 29px;
  margin-top: auto;
  padding: 0 2px;
  background: #eef0ee;
}
.dock-foot a { color: #0b66c8; margin-bottom: 4px; }
.dock-foot button { width: 98px; height: 24px; border: 1px solid #b6b7bc; background: #c9c9cc; color: #86868a; }

/* Project tree */
.tree { padding-left: 5px; }
.node { display: flex; align-items: center; height: 22px; white-space: nowrap; }
.node span { padding-left: 5px; line-height: 20px; margin-bottom: 2px; }
.node.l2 { margin-left: 26px; }
.node.l2 span { padding-left: 2px; }
.node.l2 .current { padding: 0 4px 0 3px; background: #e4e4e4; }
.twig { stroke: #8d9096; stroke-dasharray: 1 1; fill: none; }
.tree > ul > li:first-child > ul { border-left: 1px dotted #8d9096; margin-left: 6px; }
.tree > ul > li:first-child > ul .l2 { margin-left: 19px; }

/* Drawing area */
.view {
  display: flex;
  flex-direction: column;
  min-width: 0;
  min-height: 0;
  border-top: 2px solid #74767c;
  border-left: 2px solid #74767c;
}
.canvas { position: relative; flex: 1; min-height: 0; background: #fdfdfd; }
.scene { width: 100%; height: 100%; }
.viewcube { position: absolute; top: 67px; right: 0; }
.cube-text { fill: #9a9da5; font-size: 18px; }
.front { font-size: 22px; }
.side { font-size: 14px; }
.compass { font-size: 15px; }

.view-bar { display: flex; flex: none; align-items: center; gap: 8px; height: 22px; padding-left: 28px; background: #eef0ed; }
.view-bar svg { width: 20px; height: 20px; }
.scale { width: 70px; font: 13px/20px "Liberation Mono", monospace; text-align: left; }
.track-a { flex: 25; }
.thumb-h { width: 21px; height: 19px; background: #cacaca; }
.track-b { flex: 24; }

/* Status bar */
.status {
  display: flex;
  align-items: center;
  justify-content: space-between;
  flex: none;
  height: 30px;
  padding-left: 1px;
  border-top: 1px solid #8a8a8c;
  background: #d5d5d5;
}
.status-tools { display: flex; align-items: center; gap: 9px; width: 208px; overflow: hidden; white-space: nowrap; }
.status-tools span { margin-left: -9px; }
```
